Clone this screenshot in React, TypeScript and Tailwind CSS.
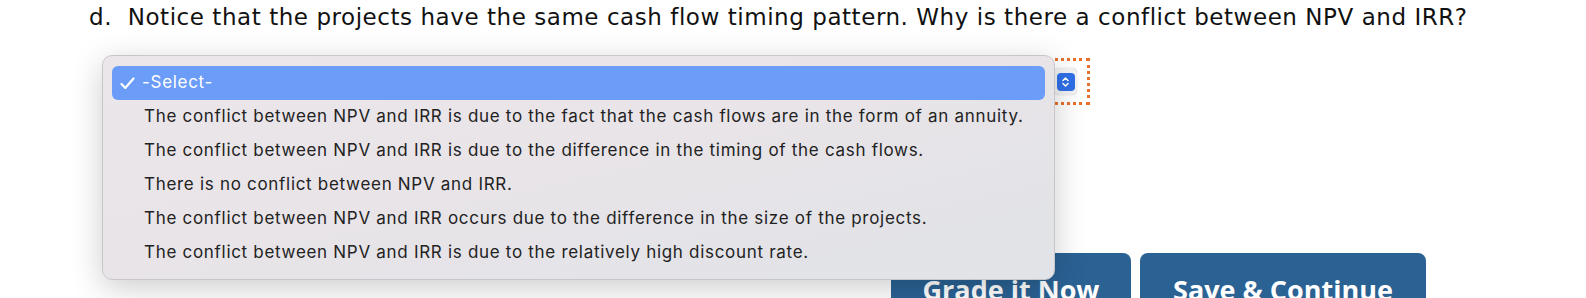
import React from 'react'

const options = [
  'The conflict between NPV and IRR is due to the fact that the cash flows are in the form of an annuity.',
  'The conflict between NPV and IRR is due to the difference in the timing of the cash flows.',
  'There is no conflict between NPV and IRR.',
  'The conflict between NPV and IRR occurs due to the difference in the size of the projects.',
  'The conflict between NPV and IRR is due to the relatively high discount rate.',
]

export default function App() {
  return (
    <main className="relative w-[1586px] h-[298px] overflow-hidden bg-white">
      <div className="pl-[89px] pt-[3px] h-[46px] text-[23px] leading-[28px] tracking-[0.55px] text-[#111] font-['DejaVu_Sans',sans-serif] whitespace-nowrap">
        d.&nbsp; Notice that the projects have the same cash flow timing pattern. Why is there a conflict between NPV and IRR?
      </div>

      {/* select with focus outline */}
      <div className="ml-[112px] mt-[12px] w-[978px] h-[47px] border-[3px] border-dotted border-[#e8702a] flex items-center justify-end pr-[10px]">
        <div className="w-[23px] h-[27px] rounded-[5px] bg-[#f2f2f2] shadow-[0_0_1px_rgba(0,0,0,0.35)] flex items-center justify-center">
          <div className="w-[18px] h-[18px] rounded-[4px] bg-[#2f6fe8] flex items-center justify-center">
            <svg width="9" height="12" viewBox="0 0 9 12" fill="none" stroke="white" strokeWidth="1.6" strokeLinecap="round" strokeLinejoin="round">
              <polyline points="2,4.5 4.5,2 7,4.5" />
              <polyline points="2,7.5 4.5,10 7,7.5" />
            </svg>
          </div>
        </div>
      </div>

      <div className="flex gap-[9px] ml-[891px] mt-[148px]">
        <button type="button" className="w-[240px] h-[60px] rounded-t-[8px] bg-[#2a6294] text-white font-bold text-[27px] font-['Open_Sans',sans-serif] pt-[14px] leading-[36px]">
          Grade it Now
        </button>
        <button type="button" className="w-[286px] h-[60px] rounded-t-[8px] bg-[#2a6294] text-white font-bold text-[27px] font-['Open_Sans',sans-serif] pt-[14px] leading-[36px]">
          Save &amp; Continue
        </button>
      </div>

      {/* open dropdown menu */}
      <div className="absolute left-[102px] top-[55px] w-[953px] h-[225px] rounded-[10px] border border-[#c9c6c9] bg-gradient-to-br from-[#ebe6ea] via-[#e8e4e8] to-[#e0e3e7] shadow-[0_8px_32px_rgba(0,0,0,0.2)] px-[9px] py-[10px] font-['Inter',sans-serif] text-[17px] tracking-[0.7px] text-[#222]">
        <div className="h-[34px] rounded-[6px] bg-[#6a9cf8] text-white flex items-center pl-[8px]">
          <svg width="15" height="13" viewBox="0 0 15 13" fill="none" stroke="white" strokeWidth="2.2" strokeLinecap="round" strokeLinejoin="round">
            <polyline points="1.5,7 5.3,11 13.5,1.5" />
          </svg>
          <span className="ml-[7px]">-Select-</span>
        </div>
        {options.map((o) => (
          <div key={o} className="h-[34px] flex items-center pl-[32px] whitespace-nowrap">
            {o}
          </div>
        ))}
      </div>
    </main>
  )
}
